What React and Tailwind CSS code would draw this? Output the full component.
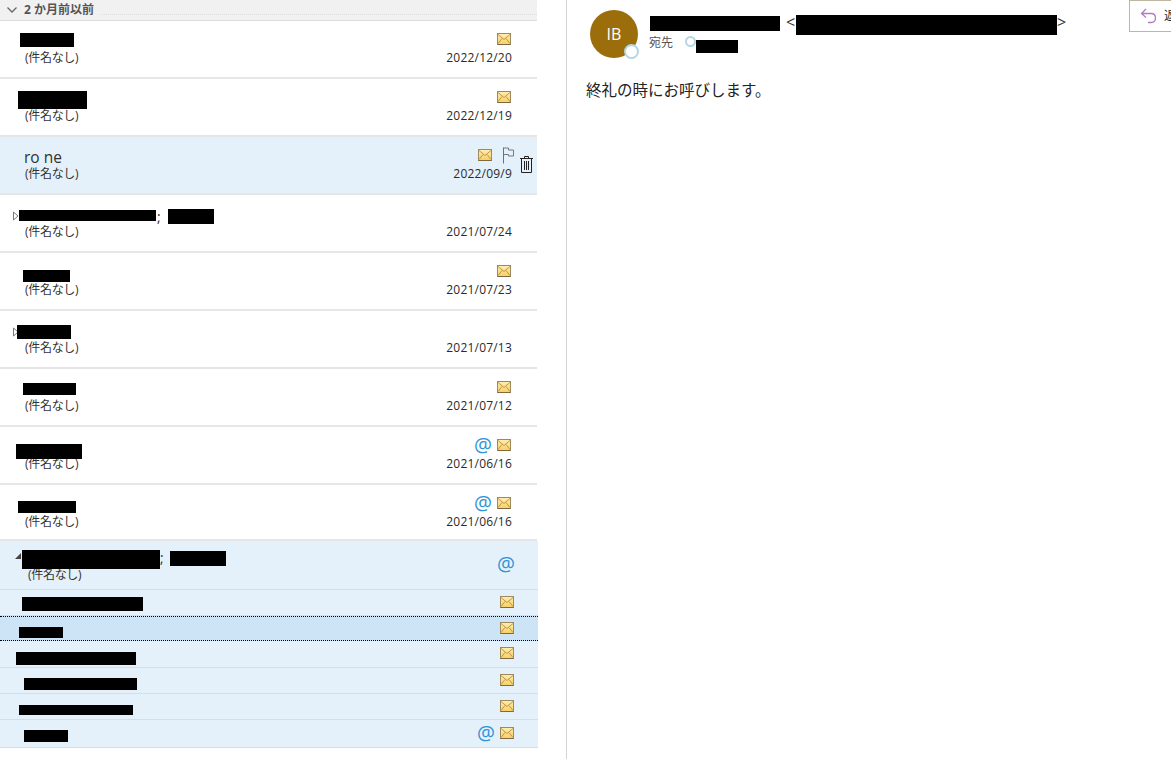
import { useId } from 'react'

const FONT = "font-['Open_Sans','Noto_Sans_CJK_JP',sans-serif]"

const MAIL_ROWS = [
  { date: '2022/12/20', mail: true, bars: ['left-[20px] top-[12px] w-[54px] h-[14px]'] },
  { date: '2022/12/19', mail: true, bars: ['left-[18px] top-[12px] w-[69px] h-[18px]'] },
  { date: '2022/09/9', selected: true, sender: 'ro ne' },
  { date: '2021/07/24', arrow: true, semi: 'left-[157px]', bars: ['left-[19px] top-[15px] w-[137px] h-[11px]', 'left-[168px] top-[14px] w-[46px] h-[15px]'] },
  { date: '2021/07/23', mail: true, bars: ['left-[23px] top-[17px] w-[47px] h-[12px]'] },
  { date: '2021/07/13', arrow: true, bars: ['left-[17px] top-[14px] w-[54px] h-[14px]'] },
  { date: '2021/07/12', mail: true, bars: ['left-[23px] top-[14px] w-[53px] h-[12px]'] },
  { date: '2021/06/16', mail: true, at: true, bars: ['left-[16px] top-[17px] w-[66px] h-[15px]'] },
  { date: '2021/06/16', mail: true, at: true, short: true, bars: ['left-[18px] top-[16px] w-[58px] h-[12px]'] },
]

const THREAD_ROWS = [
  { row: 'h-[26px] border-b border-[#dcdcdc]', bar: 'left-[22px] top-[7px] w-[121px] h-[14px]' },
  { row: 'h-[25px] bg-[#cce4f5] border-y border-dotted border-black', bar: 'left-[19px] top-[10px] w-[44px] h-[11px]' },
  { row: 'h-[27px] border-b border-[#dcdcdc]', bar: 'left-[16px] top-[11px] w-[120px] h-[13px]' },
  { row: 'h-[26px] border-b border-[#dcdcdc]', bar: 'left-[24px] top-[10px] w-[113px] h-[12px]' },
  { row: 'h-[26px] border-b border-[#dcdcdc]', bar: 'left-[19px] top-[11px] w-[114px] h-[10px]' },
  { row: 'h-[28px] border-b border-[#dcdcdc]', bar: 'left-[24px] top-[10px] w-[44px] h-[12px]', at: true },
]

function Envelope() {
  const id = useId()
  return (
    <svg width="14" height="12" viewBox="0 0 14 12" className="block shrink-0">
      <defs>
        <linearGradient id={id} x1="0" y1="0" x2="0" y2="1">
          <stop offset="0" stopColor="#ffeeb0" />
          <stop offset="1" stopColor="#f8cf62" />
        </linearGradient>
      </defs>
      <rect x="0.5" y="0.5" width="13" height="11" fill={`url(#${id})`} stroke="#a08a5c" />
      <path d="M1 1.5 7 6.5 13 1.5M1 10.5 5 5.5M13 10.5 9 5.5" fill="none" stroke="#b98d45" strokeWidth="0.9" />
      <path d="M0.5 11.5H13.5" stroke="#7d6a42" />
    </svg>
  )
}

function FlagIcon() {
  return (
    <svg width="12" height="17" viewBox="0 0 12 17" className="block">
      <path d="M1.5 0.5V16.5" stroke="#6e6e78" fill="none" />
      <path d="M1.5 1H6.5V3H11.5V9H6.5V7.5H1.5" stroke="#77777f" fill="none" />
    </svg>
  )
}

function TrashIcon() {
  return (
    <svg width="13" height="17" viewBox="0 0 13 17" className="block">
      <path d="M0 2.5H13M4.5 2.5V0.5H8.5V2.5M1.5 2.5V16.5H11.5V2.5M4.5 5V14M6.5 5V14M8.5 5V14" stroke="#222" fill="none" />
    </svg>
  )
}

function ReplyIcon() {
  return (
    <svg width="17" height="16" viewBox="0 0 17 16" className="block">
      <path d="M6 1 1.5 5.5 6 9.5M2 5.5H11C14 5.5 15.5 7.5 15.5 10S14 14.5 11 14.5H8" stroke="#b07cc0" strokeWidth="1.3" fill="none" />
    </svg>
  )
}

function AtSign({ className = '' }) {
  return <span className={`block text-[20px] leading-[18px] text-[#2f94d8] font-['Open_Sans',sans-serif] ${className}`}>@</span>
}

function Bar({ className }) {
  return <div className={`absolute bg-black ${className}`} />
}

function Subject({ className = '' }) {
  return <div className={`ml-[1px] text-[12px] leading-[16px] tracking-[-0.3px] text-[#333] ${className}`}>(件名なし)</div>
}

function MailRow({ item }) {
  return (
    <div className={`relative w-[537px] border-b-2 border-[#e6e6e6] pl-[24px] pr-[25px] pt-[9px] ${item.short ? 'h-[56px]' : 'h-[58px]'} ${item.selected ? 'bg-[#e4f1fa]' : 'bg-white'}`}>
      <div className="flex h-[20px] items-center justify-between">
        <span className="translate-y-[1px] text-[15.5px] leading-[20px] text-[#333] font-['Open_Sans',sans-serif]">{item.sender}</span>
        {item.selected ? (
          <div className="flex -translate-y-[1px] items-center">
            <Envelope />
            <div className="ml-[10px] mr-[-2px]"><FlagIcon /></div>
          </div>
        ) : (
          <div className="mr-[1px] flex -translate-y-[1px] items-center gap-[5px]">
            {item.at && <AtSign />}
            {item.mail && <Envelope />}
          </div>
        )}
      </div>
      <div className="flex items-center justify-between">
        <Subject />
        <span className="text-[12px] leading-[16px] tracking-[0.2px] text-[#2a2a2a]">{item.date}</span>
      </div>
      {item.selected && <div className="absolute left-[520px] top-[19px]"><TrashIcon /></div>}
      {item.arrow && (
        <svg width="6" height="10" viewBox="0 0 6 10" className="absolute left-[13px] top-[16px] block">
          <path d="M0.5 1 5 5 0.5 9Z" fill="white" stroke="#777" />
        </svg>
      )}
      {item.semi && <span className={`absolute top-[12px] text-[14px] leading-[20px] text-[#333] ${item.semi}`}>;</span>}
      {item.bars?.map((bar) => <Bar key={bar} className={bar} />)}
    </div>
  )
}

function ThreadGroup() {
  return (
    <div className="w-[538px] bg-[#e4f1fa]">
      <div className="relative h-[49px] border-b border-[#dcdcdc] pl-[27px] pt-[26px]">
        <Subject />
        <div className="absolute left-[15px] top-[12px] h-0 w-0 border-b-[6px] border-l-[6px] border-b-[#444] border-l-transparent" />
        <span className="absolute left-[160px] top-[7px] text-[14px] leading-[20px] text-[#333]">;</span>
        <Bar className="left-[22px] top-[9px] w-[138px] h-[19px]" />
        <Bar className="left-[170px] top-[10px] w-[56px] h-[15px]" />
        <AtSign className="absolute right-[23px] top-[14px]" />
      </div>
      {THREAD_ROWS.map((item) => (
        <div key={item.bar} className={`relative flex items-center justify-end gap-[5px] pb-[2px] pr-[24px] ${item.row}`}>
          {item.at && <AtSign />}
          <Envelope />
          <Bar className={item.bar} />
        </div>
      ))}
    </div>
  )
}

function MessagePane() {
  return (
    <div className="relative ml-[28px] h-[759px] flex-1 border-l border-[#d4d4d4] pl-[19px] pt-[10px]">
      <div className="flex">
        <div className="relative ml-[4px] flex h-[48px] w-[48px] items-center justify-center rounded-full bg-[#9c6d0b] text-[16px] text-white font-['Open_Sans',sans-serif]">
          IB
          <div className="absolute left-[34px] top-[34px] h-[15px] w-[15px] rounded-full border-2 border-[#b5d5e6] bg-white" />
        </div>
        <div className="relative ml-[11px] flex-1">
          <div className="flex h-[24px] items-center pl-[137px] text-[16px] text-[#333]">
            <span className="w-[271px]">&lt;</span>
            <span>&gt;</span>
          </div>
          <div className="mt-[1px] flex items-center text-[12px] leading-[16px] text-[#555]">
            <span>宛先</span>
            <div className="ml-[12px] h-[11px] w-[11px] -translate-y-[2px] rounded-full border-2 border-[#b5d5e6]" />
          </div>
          <Bar className="left-[1px] top-[6px] w-[130px] h-[15px]" />
          <Bar className="left-[147px] top-[5px] w-[261px] h-[20px]" />
          <Bar className="left-[47px] top-[30px] w-[42px] h-[13px]" />
        </div>
      </div>
      <p className="mt-[21px] text-[15.5px] leading-[22px] text-[#222]">終礼の時にお呼びします。</p>
      <div className="absolute left-[562px] top-0 flex h-[32px] w-[60px] items-center gap-[7px] border border-[#bdb6a0] bg-white pl-[10px] text-[12px] text-[#333]">
        <ReplyIcon />
        <span>返信</span>
      </div>
    </div>
  )
}

export default function App() {
  return (
    <div className={`flex h-[759px] w-[1171px] overflow-hidden bg-white ${FONT}`}>
      <div className="w-[538px] shrink-0">
        <div className="flex h-[21px] w-[537px] items-center border-b border-[#dcdcdc] bg-[#f1f1f1] pl-[6px] text-[12px] font-bold text-[#555]">
          <svg width="12" height="8" viewBox="0 0 12 8" className="block">
            <path d="M1.5 1.5 6 6 10.5 1.5" stroke="#666" strokeWidth="1.3" fill="none" />
          </svg>
          <span className="ml-[6px]">2 か月前以前</span>
          <div className="ml-[6px] mt-[8px] flex-1 border-b border-dotted border-[#dddddd]" />
        </div>
        {MAIL_ROWS.map((item) => <MailRow key={item.date + (item.bars?.[0] ?? '')} item={item} />)}
        <ThreadGroup />
      </div>
      <MessagePane />
    </div>
  )
}
